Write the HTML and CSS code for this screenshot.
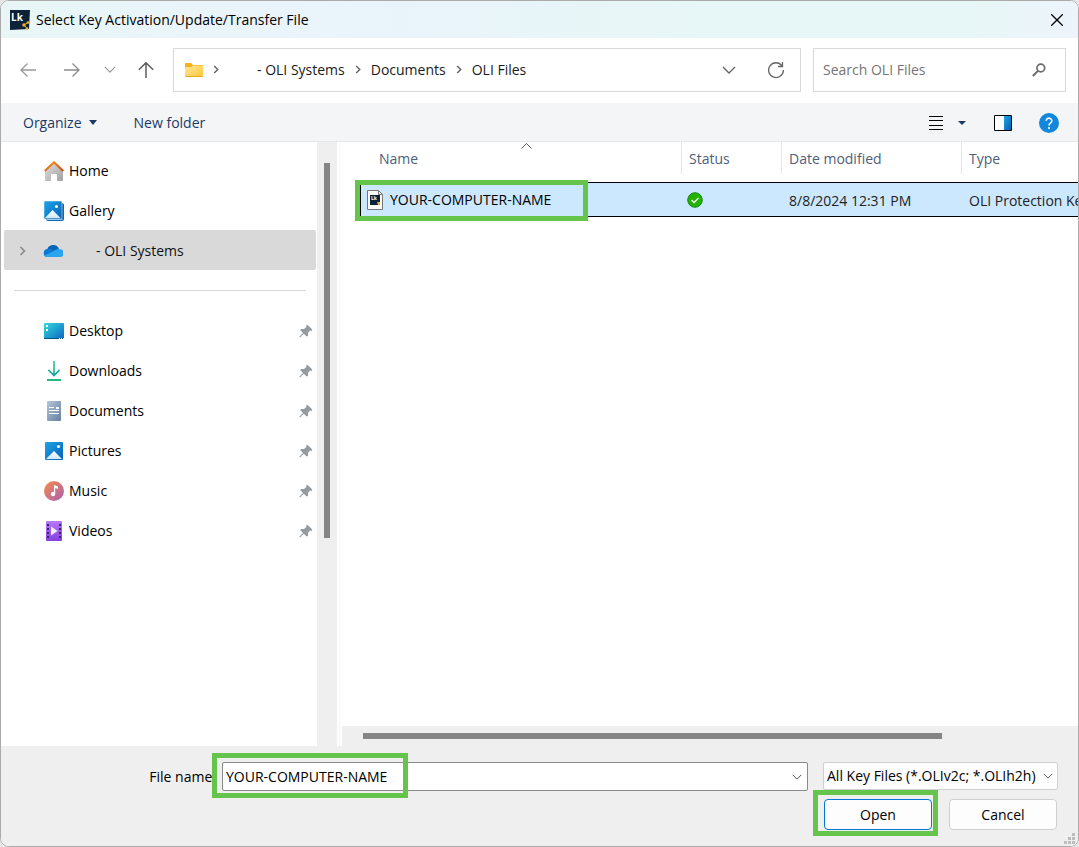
FILE: index.html
```html
<!doctype html>
<html lang="en">
<head>
  <meta charset="UTF-8">
  <meta name="viewport" content="width=device-width, initial-scale=1">
  <title>Select Key Activation/Update/Transfer File</title>
  <link rel="stylesheet" href="styles.css">
</head>
<body>
  <svg class="defs" width="0" height="0" aria-hidden="true">
    <defs>
      <linearGradient id="blue" x1="0" y1="0" x2="1" y2="1"><stop offset="0" stop-color="#1ea5e9"/><stop offset="1" stop-color="#0560b5"/></linearGradient>
      <linearGradient id="snow" x1="0" y1="0" x2="0" y2="1"><stop offset="0" stop-color="#fff"/><stop offset="1" stop-color="#cfe8fb"/></linearGradient>
      <linearGradient id="gold" x1="0" y1="0" x2="1" y2="1"><stop offset="0" stop-color="#ffe69a"/><stop offset="1" stop-color="#ffc937"/></linearGradient>
      <linearGradient id="wall" x1="0" y1="0" x2="1" y2="1"><stop offset="0" stop-color="#e0e0e0"/><stop offset="1" stop-color="#a2a2a2"/></linearGradient>
      <linearGradient id="roof" x1="0" y1="0" x2="1" y2="1"><stop offset="0" stop-color="#f59a1c"/><stop offset="1" stop-color="#cf4310"/></linearGradient>
      <linearGradient id="desk" x1="0" y1="0" x2="1" y2="1"><stop offset="0" stop-color="#35dbe0"/><stop offset="1" stop-color="#0b67c0"/></linearGradient>
      <linearGradient id="green" x1="0" y1="0" x2="0" y2="1"><stop offset="0" stop-color="#2fc982"/><stop offset="1" stop-color="#13a0a0"/></linearGradient>
      <linearGradient id="paper" x1="0" y1="0" x2="1" y2="1"><stop offset="0" stop-color="#b4c6da"/><stop offset="1" stop-color="#6480a0"/></linearGradient>
      <linearGradient id="tune" x1="0" y1="0" x2="1" y2="1"><stop offset="0" stop-color="#f98d4b"/><stop offset="1" stop-color="#a55fb4"/></linearGradient>
      <linearGradient id="film" x1="0" y1="0" x2="0" y2="1"><stop offset="0" stop-color="#b57af5"/><stop offset="1" stop-color="#8440e0"/></linearGradient>
      <symbol id="right" viewBox="0 0 6 10"><path d="M1 1l4 4-4 4" fill="none" stroke="currentColor" stroke-width="1.6"/></symbol>
      <symbol id="down" viewBox="0 0 14 8"><path d="M1 1l6 6 6-6" fill="none" stroke="currentColor" stroke-width="1.4"/></symbol>
      <symbol id="pin" viewBox="0 0 14 14"><path d="M8.3 0.7L13.3 5.6 12.4 6.9 11.1 6.6 9 8.8 9 11.8 7.7 12.6 4.8 9.8 1.2 13.2H.5V12.4L4 9 1.1 6 2.1 5 5.1 4.9 7.5 2.7 7.2 1.5z" fill="#939ca3"/></symbol>
    </defs>
  </svg>

  <div class="dialog">
    <header class="titlebar">
      <svg width="20" height="20" viewBox="0 0 20 20"><path d="M0 0h20l-1 19L0 20z" fill="#0c2238"/><path d="M14 15l4-2.500M14 15l3 3.500" stroke="#f4ad27"/><circle cx="14" cy="15" r="1.800" fill="#f4ad27"/><circle cx="18" cy="12.500" r="1.300" fill="#f4ad27"/><circle cx="17" cy="18.500" r="1.300" fill="#f4ad27"/><text class="logo-text" x="1" y="11">Lk</text></svg>
      <h1>Select Key Activation/Update/Transfer File</h1>
      <button class="close" aria-label="Close"><svg width="12" height="12" viewBox="0 0 12 12"><path d="M0 0l12 12M12 0L0 12" stroke="#000" stroke-width="1.3"/></svg></button>
    </header>

    <nav class="navbar">
      <div class="history">
        <button class="dim" aria-label="Back"><svg width="16" height="14" viewBox="0 0 16 14"><path d="M7.5.5L1 7l6.500 6.500M1 7h15" fill="none" stroke="currentColor" stroke-width="1.3"/></svg></button>
        <button class="dim" aria-label="Forward"><svg width="16" height="14" viewBox="0 0 16 14"><path d="M8.5.5L15 7l-6.500 6.500M15 7H0" fill="none" stroke="currentColor" stroke-width="1.3"/></svg></button>
        <button class="dim recent" aria-label="Recent locations"><svg width="12" height="7"><use href="#down"/></svg></button>
        <button aria-label="Up"><svg width="16" height="16" viewBox="0 0 16 16"><path d="M.8 7.800L8 .8l7.200 7M8 1v15" fill="none" stroke="currentColor" stroke-width="1.5"/></svg></button>
      </div>
      <div class="address">
        <svg class="folder" width="18" height="14" viewBox="0 0 18 14"><path d="M0 1q0-1 1-1h5l2 2h9q1 0 1 1v3H0z" fill="#f5b01d"/><path d="M0 5q0-1 1-1h5l2-1.500h9q1 0 1 1V13q0 1-1 1H1q-1 0-1-1z" fill="url(#gold)"/><path d="M.5 13.500h17" stroke="#e9a825"/></svg>
        <svg width="6" height="9"><use href="#right"/></svg>
        <a class="owner" href="#">- OLI Systems</a>
        <svg width="6" height="9"><use href="#right"/></svg>
        <a href="#">Documents</a>
        <svg width="6" height="9"><use href="#right"/></svg>
        <a href="#">OLI Files</a>
        <button class="drop" aria-label="Previous locations"><svg width="14" height="8"><use href="#down"/></svg></button>
        <button aria-label="Refresh"><svg width="18" height="18" viewBox="0 0 18 18"><path d="M15 4.800A7.400 7.400 0 1 0 16.400 9M15.500 1v4.500H11" fill="none" stroke="currentColor" stroke-width="1.3"/></svg></button>
      </div>
      <div class="search">
        <input type="search" placeholder="Search OLI Files" aria-label="Search OLI Files">
        <svg width="14" height="14" viewBox="0 0 14 14"><circle cx="8.800" cy="5" r="3.900" fill="none" stroke="#6b6b6b" stroke-width="1.7"/><path d="M6 7.900L.8 13" stroke="#6b6b6b" stroke-width="2"/></svg>
      </div>
    </nav>

    <div class="toolbar">
      <button>Organize <svg width="8" height="5" viewBox="0 0 8 5"><path d="M0 0h8L4 5z" fill="#1b3a66"/></svg></button>
      <button>New folder</button>
      <div class="views">
        <button aria-label="View"><svg width="14" height="14" viewBox="0 0 14 14"><path d="M0 .5h14M0 4.500h14M0 9.500h14M0 13.500h14" stroke="#000"/></svg></button>
        <button aria-label="More views"><svg width="8" height="4" viewBox="0 0 8 4"><path d="M0 0h8L4 4z" fill="#1b3a66"/></svg></button>
        <button class="preview" aria-label="Preview pane"><svg width="18" height="16" viewBox="0 0 18 16"><path d="M.5.5h17v15H.5z" fill="#fff" stroke="#000"/><path d="M10 1h7v14h-7z" fill="url(#blue)"/></svg></button>
        <button aria-label="Help"><svg width="20" height="20" viewBox="0 0 20 20"><circle cx="10" cy="10" r="10" fill="#1287dc"/><path d="M7.200 7.800a2.800 2.600 0 1 1 4.400 2.100q-1.600 1-1.600 2.600" fill="none" stroke="#fff" stroke-width="1.6"/><circle cx="10" cy="15" r="1.100" fill="#fff"/></svg></button>
      </div>
    </div>

    <main class="content">
      <aside class="sidebar">
        <ul>
          <li><a href="#"><svg width="20" height="20" viewBox="0 0 20 20"><path d="M1 9l9-8 9 8v10q0 1-1 1h-5v-7H7v7H2q-1 0-1-1z" fill="url(#wall)"/><path d="M.7 10L10 1.200l9.300 8.800" fill="none" stroke="url(#roof)" stroke-width="2"/></svg>Home</a></li>
          <li><a href="#"><svg width="20" height="20" viewBox="0 0 20 20"><path d="M18 2q2 0 2 2v14q0 2-2 2H4q-2 0-2-2z" fill="#1265ae"/><path d="M3 18.500h15.500" stroke="#8bbde6"/><rect width="18" height="18" rx="1" fill="url(#blue)" stroke="#fff" stroke-width=".5"/><path d="M1 17l7.500-8 8 8z" fill="url(#snow)"/><circle cx="12.500" cy="5.500" r="1.500" fill="#fff"/></svg>Gallery</a></li>
          <li class="selected"><a href="#"><svg class="expand" width="7" height="10"><use href="#right"/></svg><svg width="20" height="20" viewBox="0 0 20 20"><path d="M4 9a6.300 6.300 0 0 1 12-1l-7 5z" fill="#0864b8"/><path d="M5 8a4.500 4.500 0 0 1 4 .5l7 5-10 2.500H4.500A4 4 0 0 1 5 8z" fill="#0c79d4"/><path d="M9 11l4-2.500q2-1 4-.3a4 3.900 0 0 1-.5 7.800h-12q-2 0-3-1.500z" fill="#29a4ee"/></svg><span class="owner-label">- OLI Systems</span></a></li>
        </ul>
        <hr>
        <ul>
          <li><a href="#"><svg width="20" height="20" viewBox="0 0 20 20"><rect y="2" width="20" height="16" rx="1" fill="url(#desk)"/><path d="M0 17.500h20" stroke="#075184"/><path d="M2 4h2v2H2zM2 8h2v2H2z" fill="#fff"/><path d="M15 17.500h1M17 17.500h1M19 17.500h1" stroke="#fff"/></svg>Desktop<svg class="pin" width="14" height="14"><use href="#pin"/></svg></a></li>
          <li><a href="#"><svg width="20" height="20" viewBox="0 0 20 20"><path d="M9.200 0h1.600v12.500l4.200-4.200 1.200 1.200-6.200 6.200-6.200-6.200L5 8.300l4.200 4.200z" fill="url(#green)"/><path d="M3 18h14v2H3z" fill="#23b982"/></svg>Downloads<svg class="pin" width="14" height="14"><use href="#pin"/></svg></a></li>
          <li><a href="#"><svg width="20" height="20" viewBox="0 0 20 20"><rect x="3" width="14" height="20" rx="1" fill="url(#paper)"/><path d="M5 6.500h5M5 9.500h10M5 12.500h10" stroke="#fff"/><path d="M12 6h3v2h-3z" fill="#fff"/></svg>Documents<svg class="pin" width="14" height="14"><use href="#pin"/></svg></a></li>
          <li><a href="#"><svg width="20" height="20" viewBox="0 0 20 20"><rect x="1" y="1" width="18" height="18" rx="1" fill="url(#blue)"/><path d="M2 18l8-8 8 8z" fill="url(#snow)"/><circle cx="14.500" cy="5.500" r="1.600" fill="#fff"/></svg>Pictures<svg class="pin" width="14" height="14"><use href="#pin"/></svg></a></li>
          <li><a href="#"><svg width="20" height="20" viewBox="0 0 20 20"><circle cx="10" cy="10" r="10" fill="url(#tune)"/><circle cx="9" cy="13" r="2.200" fill="#fff"/><path d="M10 13V4l4 1.500v2.500L11.200 7V13z" fill="#fff"/></svg>Music<svg class="pin" width="14" height="14"><use href="#pin"/></svg></a></li>
          <li><a href="#"><svg width="20" height="20" viewBox="0 0 20 20"><rect x="2" width="16" height="20" rx="1" fill="url(#film)"/><path d="M4 3v16M16 3v16" stroke="#3d2472" stroke-width="2" stroke-dasharray="2 2"/><path d="M7 5.500l6.500 4.500L7 14.500z" fill="#f4ecff"/></svg>Videos<svg class="pin" width="14" height="14"><use href="#pin"/></svg></a></li>
        </ul>
      </aside>
      <div class="vscroll"><div class="thumb"></div></div>

      <section class="files">
        <div class="list">
          <table>
            <thead>
              <tr>
                <th class="col-name"><svg class="sort" width="11" height="6" viewBox="0 0 11 6"><path d="M.5 5.500l5-5 5 5" fill="none" stroke="#555"/></svg><div>Name</div></th>
                <th class="col-status"><div>Status</div></th>
                <th class="col-date"><div>Date modified</div></th>
                <th class="col-type"><div>Type</div></th>
              </tr>
            </thead>
            <tbody>
              <tr>
                <td class="name">
                  <div class="file">
                    <svg width="16" height="20" viewBox="0 0 16 20"><path d="M.5.5h11l4 4v15H.5z" fill="#fafafa" stroke="#777"/><path d="M11.500.5v4h4" fill="none" stroke="#777"/><path d="M3 5h10v10H3z" fill="#0c2238"/><path d="M10 12h3v3h-2z" fill="#e0b34c"/><text class="file-logo" x="4" y="10">Lk</text></svg>
                    <span>YOUR-COMPUTER-NAME</span>
                  </div>
                  <div class="mark mark-file"></div>
                </td>
                <td><svg width="16" height="16" viewBox="0 0 16 16"><circle cx="8" cy="8" r="7.300" fill="#24b200" stroke="#168c16"/><path d="M4.500 8l2.500 2.500 4.500-4.500" fill="none" stroke="#fff" stroke-width="1.3"/></svg></td>
                <td>8/8/2024 12:31 PM</td>
                <td>OLI Protection Key</td>
              </tr>
            </tbody>
          </table>
        </div>
        <div class="hscroll"><div class="thumb"></div></div>
      </section>
    </main>

    <form class="footer" onsubmit="return false">
      <div class="fields">
        <label for="filename">File name:</label>
        <div class="combo">
          <input id="filename" type="text" value="YOUR-COMPUTER-NAME">
          <button type="button" aria-label="Show file names"><svg width="10" height="6"><use href="#down"/></svg></button>
          <div class="mark mark-input"></div>
        </div>
        <div class="filter">
          <select aria-label="File type"><option>All Key Files (*.OLIv2c; *.OLIh2h)</option></select>
          <svg width="10" height="6"><use href="#down"/></svg>
        </div>
      </div>
      <div class="actions">
        <div class="primary">
          <button class="open" type="submit">Open</button>
          <div class="mark mark-open"></div>
        </div>
        <button type="button">Cancel</button>
      </div>
      <svg class="grip" width="11" height="11" viewBox="0 0 11 11"><path d="M8 0h3v3H8zM4 4h3v3H4zM8 4h3v3H8zM0 8h3v3H0zM4 8h3v3H4zM8 8h3v3H8z" fill="#bdbdbd"/></svg>
    </form>
  </div>
</body>
</html>
```
FILE: styles.css
```css
*{box-sizing:border-box;}
body{
  margin:0;
  background:#e6e6e6;
  color:#1a1a1a;
  font:14px/20px "Open Sans","Noto Sans",sans-serif;
}
button,input,select{font:inherit;color:inherit;}
button{display:flex;align-items:center;justify-content:center;padding:0;border:0;background:none;}
svg{display:block;flex:none;}
a{color:inherit;text-decoration:none;}
ul{margin:0;padding:0;list-style:none;}
.defs{position:absolute;}

.dialog{
  display:flex;
  flex-direction:column;
  min-height:100vh;
  border:1px solid #ababab;
  border-radius:9px;
  background:#fff;
  overflow:hidden;
}

/* title bar */
.titlebar{
  display:flex;
  align-items:center;
  height:37px;
  padding:0 15px 0 9px;
  background:linear-gradient(90deg,#e8f6f6,#eaf4fb 30%,#e7f6f6 65%,#e7f6f6 90%,#edf4fb);
}
.titlebar h1{flex:1;margin:0 0 0 6px;font-size:14px;font-weight:400;color:#000;}
.logo-text{font:bold 10px "Open Sans",sans-serif;fill:#fff;}

/* navigation */
.navbar{display:flex;align-items:center;height:65px;padding:0 12px 2px 19px;gap:12px;}
.history{display:flex;align-items:center;width:141px;color:#5c5c5c;}
.history button{width:16px;margin-right:28px;}
.history .recent{width:12px;margin:0 22px 0 -4px;}
.history button:last-child{margin-right:0;}
.history .dim{color:#999;}
.history .dim:nth-child(2){color:#8c8c8c;}
.address{
  display:flex;
  align-items:center;
  flex:1;
  height:44px;
  padding:0 15px 0 11px;
  gap:10px;
  border:1px solid #d9d9d9;
  color:#666;
}
.address a{color:#1a1a1a;}
.address .owner{margin-left:28px;}
.address .drop{margin-left:auto;margin-right:21px;}
.search{display:flex;align-items:center;width:253px;height:44px;padding:0 19px 0 9px;border:1px solid #d9d9d9;}
.search input{flex:1;min-width:0;padding:0;border:0;outline:0;background:none;}
.search input::placeholder{color:#757575;opacity:1;}

/* command bar */
.toolbar{
  display:flex;
  align-items:center;
  height:39px;
  padding:1px 19px 0 22px;
  gap:37px;
  border-bottom:1px solid #e6e7e9;
  background:#f4f5f7;
  color:#1b3a66;
}
.toolbar button{gap:7px;}
.views{display:flex;align-items:center;gap:15px;margin-left:auto;}
.views .preview{margin:0 12px 0 13px;}

/* panes */
.content{display:flex;flex:1;}
.sidebar{width:316px;padding:8px 1px 0 3px;color:#000;}
.sidebar a{display:flex;align-items:center;height:40px;padding:1px 3px 0 40px;gap:5px;}
.sidebar .selected{border-radius:2px;background:#d9d9d9;}
.sidebar .selected a{padding-left:16px;color:#111;}
.expand{margin-right:12px;color:#888;}
.sidebar .expand{margin-right:12px;margin-left:-1px;}
.owner-label{margin-left:28px;}
.sidebar hr{height:1px;margin:20px 10px 19px;border:0;background:#d9d9d9;}
.pin{margin-left:auto;}
.vscroll{width:20px;padding:21px 7px 0;background:#efefef;}
.vscroll .thumb{width:6px;height:375px;background:#858585;}
.files{
  display:flex;
  flex-direction:column;
  flex:1;
  min-width:0;
  margin-left:2px;
  border-left:1px solid #f5f5f5;
}
.list{flex:1;padding-left:20px;overflow:hidden;}
.list table{width:800px;table-layout:fixed;border-spacing:0;}
.list th{position:relative;padding:0 0 8px;text-align:left;font-weight:400;color:#4c607a;}
.list th div{height:32px;padding:7px 7px 0;border-left:1px solid #e5e5e5;}
.list .col-name div{padding-left:19px;border:0;}
.col-name{width:321px;}
.col-status{width:100px;}
.col-date{width:180px;}
.sort{position:absolute;top:1px;left:161px;}
.list td{
  height:35px;
  padding:0 6px;
  border:solid #000;
  border-width:1px 0;
  background:#cce8ff;
  color:#222;
}
.list td:nth-child(n+3){padding:2px 0 0 8px;white-space:nowrap;}
.list .name{position:relative;border-left-width:1px;color:#000;}
.file{display:flex;align-items:center;gap:7px;}
.file-logo{font:bold 5px "Open Sans",sans-serif;fill:#fff;}
.hscroll{height:20px;margin-left:2px;padding:7px 0 0 21px;background:#efefef;}
.hscroll .thumb{width:81%;height:6px;background:#858585;}

/* green callouts over the dialog */
.mark{position:absolute;border:5px solid #64c44c;pointer-events:none;}
.mark-file{top:-3px;left:-6px;width:233px;height:41px;}
.mark-input{top:-10px;left:-11px;width:196px;height:45px;}
.mark-open{top:-9px;left:-11px;width:125px;height:46px;}

/* file name and buttons */
.footer{position:relative;height:100px;padding:16px 20px 0 0;background:#efefef;color:#000;}
.fields{display:flex;align-items:flex-start;}
.fields label{width:221px;padding:5px 6px 0 0;text-align:right;}
.combo{
  position:relative;
  display:flex;
  flex:1;
  height:29px;
  margin-right:15px;
  border:1px solid #8a8a8a;
  border-radius:2px;
  background:#fff;
}
.combo input{flex:1;min-width:0;padding:0 3px;border:0;outline:0;background:none;}
.combo button{width:20px;color:#555;}
.filter{position:relative;width:235px;color:#555;}
.filter select{
  appearance:none;
  width:100%;
  height:28px;
  padding:0 20px 0 3px;
  border:1px solid #d0d0d0;
  border-radius:2px;
  background:#fdfdfd;
  color:#000;
}
.filter svg{position:absolute;top:11px;right:5px;}
.actions{display:flex;justify-content:flex-end;gap:17px;margin-top:8px;padding-right:1px;}
.actions button{width:108px;height:31px;border:1px solid #d0d0d0;border-radius:4px;background:#fdfdfd;}
.actions .open{border-color:#0078d4;}
.primary{position:relative;}
.grip{position:absolute;right:3px;bottom:2px;}
```
